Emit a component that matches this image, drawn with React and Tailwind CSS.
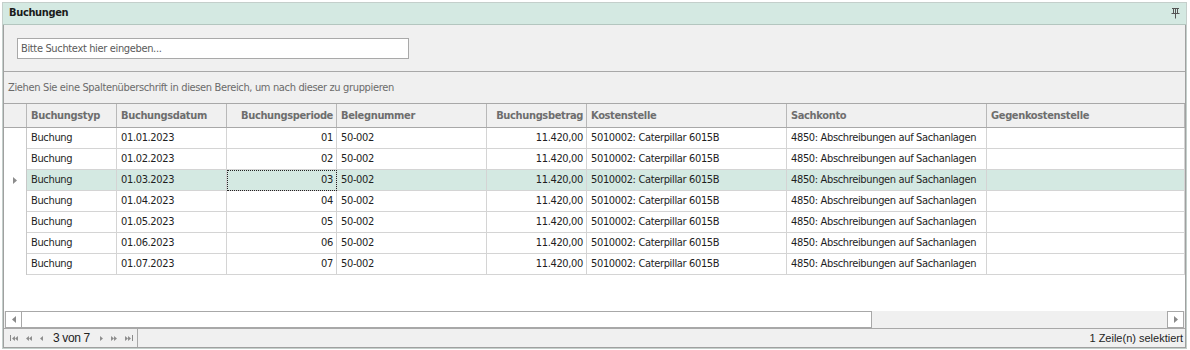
import { useState } from "react";

const columns = [
  { key: "typ", label: "Buchungstyp" },
  { key: "datum", label: "Buchungsdatum" },
  { key: "periode", label: "Buchungsperiode", right: true },
  { key: "beleg", label: "Belegnummer" },
  { key: "betrag", label: "Buchungsbetrag", right: true },
  { key: "kst", label: "Kostenstelle" },
  { key: "konto", label: "Sachkonto" },
  { key: "gkst", label: "Gegenkostenstelle" },
];

const rows = [1, 2, 3, 4, 5, 6, 7].map((m) => ({
  typ: "Buchung",
  datum: `01.0${m}.2023`,
  periode: `0${m}`,
  beleg: "50-002",
  betrag: "11.420,00",
  kst: "5010002: Caterpillar 6015B",
  konto: "4850: Abschreibungen auf Sachanlagen",
  gkst: "",
}));

const gridCols =
  "grid grid-cols-[23px_90px_110px_110px_150px_100px_200px_200px_1fr]";

const Tri = ({ dir = "right", className = "" }) => (
  <svg width="4" height="7" viewBox="0 0 4 7" className={className}>
    {dir === "right" ? (
      <path d="M0 0 L4 3.5 L0 7 Z" fill="currentColor" />
    ) : (
      <path d="M4 0 L0 3.5 L4 7 Z" fill="currentColor" />
    )}
  </svg>
);

const PinIcon = () => (
  <svg width="9" height="11" viewBox="0 0 9 11" className="text-[#555]">
    <path d="M1 0.5 H8 M4.5 0.5 V6 M2.5 1 V5 M6.5 1 V5 M0.5 5.5 H8.5 M4.5 6 V10.5" stroke="currentColor" strokeWidth="1" fill="none" />
  </svg>
);

const Pager = () => (
  <div className="flex items-center h-full pl-[6px] pr-[4px] gap-[8px] text-[#8a8a8a] border-r border-[#a8a8a8]">
    <span className="flex items-center">
      <span className="w-[1px] h-[6px] bg-current mr-[1px]" />
      <Tri dir="left" className="w-[3px] h-[5px]" />
      <Tri dir="left" className="w-[3px] h-[5px]" />
    </span>
    <span className="flex items-center">
      <Tri dir="left" className="w-[3px] h-[5px]" />
      <Tri dir="left" className="w-[3px] h-[5px]" />
    </span>
    <Tri dir="left" className="w-[3px] h-[5px]" />
    <span className="text-[#222] text-[12px] font-['Liberation_Sans',sans-serif] px-[2px]">
      3 von 7
    </span>
    <Tri className="w-[3px] h-[5px]" />
    <span className="flex items-center">
      <Tri className="w-[3px] h-[5px]" />
      <Tri className="w-[3px] h-[5px]" />
    </span>
    <span className="flex items-center">
      <Tri className="w-[3px] h-[5px]" />
      <Tri className="w-[3px] h-[5px]" />
      <span className="w-[1px] h-[6px] bg-current ml-[1px]" />
    </span>
  </div>
);

export default function App() {
  const [search, setSearch] = useState("");
  const selected = 2;

  return (
    <div className="w-[1190px] h-[350px] bg-white pt-[2px] pl-[2px] pr-[3px] pb-[1px] font-['DejaVu_Sans_Condensed','DejaVu_Sans',sans-serif] text-[11px] tracking-[-0.35px] text-[#1e1e1e]">
      <div className="h-full flex flex-col border border-[#c4cfcb]">
        {/* Titelleiste */}
        <div className="h-[22px] shrink-0 bg-[#d4e9e2] flex items-center justify-between pl-[6px] pr-[6px] border-b border-[#b3c6bf]">
          <span className="font-bold text-[#1b1b1b]">Buchungen</span>
          <PinIcon />
        </div>

        <div className="flex-1 flex flex-col bg-[#f0f0f0] border-x border-[#a0a0a0] border-b min-h-0">
          {/* Suche */}
          <div className="h-[47px] shrink-0 pt-[13px] pl-[13px] border-b border-[#a8a8a8]">
            <input
              value={search}
              onChange={(e) => setSearch(e.target.value)}
              placeholder="Bitte Suchtext hier eingeben..."
              className="w-[392px] h-[21px] bg-white border border-[#a9a9a9] px-[3px] text-[11px] outline-none placeholder:text-[#5a5a5a]"
            />
          </div>

          {/* Gruppierungsbereich */}
          <div className="h-[32px] shrink-0 flex items-center pl-[4px] pt-[1px] text-[#6b6b6b] border-b border-[#a8a8a8]">
            Ziehen Sie eine Spaltenüberschrift in diesen Bereich, um nach dieser zu gruppieren
          </div>

          {/* Tabelle */}
          <div className="flex-1 flex flex-col bg-white min-h-0">
            <div className={`${gridCols} h-[24px] shrink-0 bg-[#f0f0f0] border-b border-[#a8a8a8] font-bold text-[#6e6e6e]`}>
              <div className="border-r border-[#b8b8b8]" />
              {columns.map((c) => (
                <div
                  key={c.key}
                  className={`flex items-center pt-[2px] border-r border-[#b8b8b8] px-[4px] whitespace-nowrap overflow-hidden ${c.right ? "justify-end pr-[3px]" : ""}`}
                >
                  {c.label}
                </div>
              ))}
            </div>

            <div className="flex-1">
              {rows.map((r, i) => {
                const sel = i === selected;
                return (
                  <div key={i} className={`${gridCols} h-[21px]`}>
                    <div className="flex items-center justify-center border-r border-[#c8c8c8] text-[#8c8c8c]">
                      {sel && <Tri />}
                    </div>
                    {columns.map((c) => (
                      <div
                        key={c.key}
                        className={`flex items-center border-r border-b border-[#d4d4d4] px-[4px] whitespace-nowrap overflow-hidden ${c.right ? "justify-end pr-[3px]" : ""} ${sel ? "bg-[#d4e9e2]" : ""} ${sel && c.key === "periode" ? "outline outline-1 outline-dotted outline-[#222] -outline-offset-1" : ""}`}
                      >
                        {r[c.key]}
                      </div>
                    ))}
                  </div>
                );
              })}
            </div>

            {/* Horizontale Scrollleiste */}
            <div className="h-[17px] shrink-0 flex bg-[#f0f0f0] px-[1px]">
              <div className="w-[17px] h-[17px] bg-white border border-[#a8a8a8] flex items-center justify-center text-[#8a8a8a]">
                <Tri dir="left" />
              </div>
              <div className="w-[850px] h-[17px] bg-white border border-[#a8a8a8] border-l-0" />
              <div className="flex-1" />
              <div className="w-[17px] h-[17px] bg-white border border-[#a8a8a8] flex items-center justify-center text-[#8a8a8a]">
                <Tri />
              </div>
            </div>
          </div>

          {/* Fußzeile */}
          <div className="h-[19px] shrink-0 flex items-center justify-between border-t border-[#a8a8a8] bg-[#f0f0f0]">
            <Pager />
            <span className="pr-[2px] text-[#1e1e1e] text-[11px] tracking-normal font-['Liberation_Sans',sans-serif]">
              1 Zeile(n) selektiert
            </span>
          </div>
        </div>
      </div>
    </div>
  );
}
